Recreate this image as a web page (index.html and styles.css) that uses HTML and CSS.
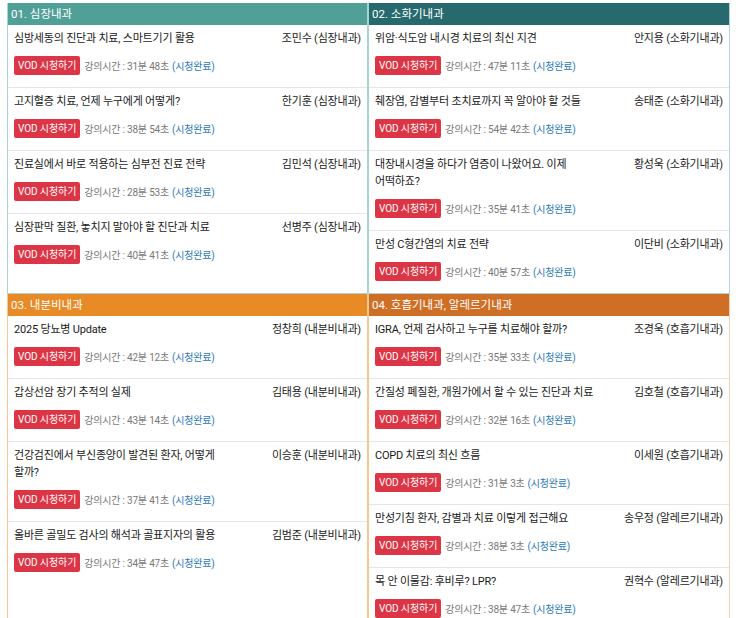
FILE: index.html
```html
<!DOCTYPE html>
<html lang="ko">
<head>
<meta charset="utf-8">
<title>VOD</title>
<link rel="stylesheet" href="styles.css">
</head>
<body>
<div class="grid">
  <section class="panel p1">
    <h2 class="head">01. 심장내과</h2>
    <ul class="list">
      <li class="row"><div class="top"><span class="title">심방세동의 진단과 치료, 스마트기기 활용</span><span class="author">조민수 (심장내과)</span></div><div class="meta"><span class="btn">VOD 시청하기</span><span class="dur">강의시간 : 31분 48초</span><span class="done">(시청완료)</span></div></li>
      <li class="row"><div class="top"><span class="title">고지혈증 치료, 언제 누구에게 어떻게?</span><span class="author">한기훈 (심장내과)</span></div><div class="meta"><span class="btn">VOD 시청하기</span><span class="dur">강의시간 : 38분 54초</span><span class="done">(시청완료)</span></div></li>
      <li class="row"><div class="top"><span class="title">진료실에서 바로 적용하는 심부전 진료 전략</span><span class="author">김민석 (심장내과)</span></div><div class="meta"><span class="btn">VOD 시청하기</span><span class="dur">강의시간 : 28분 53초</span><span class="done">(시청완료)</span></div></li>
      <li class="row"><div class="top"><span class="title">심장판막 질환, 놓치지 말아야 할 진단과 치료</span><span class="author">선병주 (심장내과)</span></div><div class="meta"><span class="btn">VOD 시청하기</span><span class="dur">강의시간 : 40분 41초</span><span class="done">(시청완료)</span></div></li>
    </ul>
  </section>
  <section class="panel p2">
    <h2 class="head">02. 소화기내과</h2>
    <ul class="list">
      <li class="row"><div class="top"><span class="title">위암·식도암 내시경 치료의 최신 지견</span><span class="author">안지용 (소화기내과)</span></div><div class="meta"><span class="btn">VOD 시청하기</span><span class="dur">강의시간 : 47분 11초</span><span class="done">(시청완료)</span></div></li>
      <li class="row"><div class="top"><span class="title">췌장염, 감별부터 초치료까지 꼭 알아야 할 것들</span><span class="author">송태준 (소화기내과)</span></div><div class="meta"><span class="btn">VOD 시청하기</span><span class="dur">강의시간 : 54분 42초</span><span class="done">(시청완료)</span></div></li>
      <li class="row"><div class="top"><span class="title">대장내시경을 하다가 염증이 나왔어요. 이제 어떡하죠?</span><span class="author">황성욱 (소화기내과)</span></div><div class="meta"><span class="btn">VOD 시청하기</span><span class="dur">강의시간 : 35분 41초</span><span class="done">(시청완료)</span></div></li>
      <li class="row"><div class="top"><span class="title">만성 C형간염의 치료 전략</span><span class="author">이단비 (소화기내과)</span></div><div class="meta"><span class="btn">VOD 시청하기</span><span class="dur">강의시간 : 40분 57초</span><span class="done">(시청완료)</span></div></li>
    </ul>
  </section>
  <section class="panel p3">
    <h2 class="head">03. 내분비내과</h2>
    <ul class="list">
      <li class="row"><div class="top"><span class="title">2025 당뇨병 Update</span><span class="author">정창희 (내분비내과)</span></div><div class="meta"><span class="btn">VOD 시청하기</span><span class="dur">강의시간 : 42분 12초</span><span class="done">(시청완료)</span></div></li>
      <li class="row"><div class="top"><span class="title">갑상선암 장기 추적의 실제</span><span class="author">김태용 (내분비내과)</span></div><div class="meta"><span class="btn">VOD 시청하기</span><span class="dur">강의시간 : 43분 14초</span><span class="done">(시청완료)</span></div></li>
      <li class="row"><div class="top"><span class="title">건강검진에서 부신종양이 발견된 환자, 어떻게 할까?</span><span class="author">이승훈 (내분비내과)</span></div><div class="meta"><span class="btn">VOD 시청하기</span><span class="dur">강의시간 : 37분 41초</span><span class="done">(시청완료)</span></div></li>
      <li class="row"><div class="top"><span class="title">올바른 골밀도 검사의 해석과 골표지자의 활용</span><span class="author">김범준 (내분비내과)</span></div><div class="meta"><span class="btn">VOD 시청하기</span><span class="dur">강의시간 : 34분 47초</span><span class="done">(시청완료)</span></div></li>
    </ul>
  </section>
  <section class="panel p4">
    <h2 class="head">04. 호흡기내과, 알레르기내과</h2>
    <ul class="list">
      <li class="row"><div class="top"><span class="title">IGRA, 언제 검사하고 누구를 치료해야 할까?</span><span class="author">조경욱 (호흡기내과)</span></div><div class="meta"><span class="btn">VOD 시청하기</span><span class="dur">강의시간 : 35분 33초</span><span class="done">(시청완료)</span></div></li>
      <li class="row"><div class="top"><span class="title">간질성 폐질환, 개원가에서 할 수 있는 진단과 치료</span><span class="author">김호철 (호흡기내과)</span></div><div class="meta"><span class="btn">VOD 시청하기</span><span class="dur">강의시간 : 32분 16초</span><span class="done">(시청완료)</span></div></li>
      <li class="row"><div class="top"><span class="title">COPD 치료의 최신 흐름</span><span class="author">이세원 (호흡기내과)</span></div><div class="meta"><span class="btn">VOD 시청하기</span><span class="dur">강의시간 : 31분 3초</span><span class="done">(시청완료)</span></div></li>
      <li class="row"><div class="top"><span class="title">만성기침 환자, 감별과 치료 이렇게 접근해요</span><span class="author">송우정 (알레르기내과)</span></div><div class="meta"><span class="btn">VOD 시청하기</span><span class="dur">강의시간 : 38분 3초</span><span class="done">(시청완료)</span></div></li>
      <li class="row"><div class="top"><span class="title">목 안 이물감: 후비루? LPR?</span><span class="author">권혁수 (알레르기내과)</span></div><div class="meta"><span class="btn">VOD 시청하기</span><span class="dur">강의시간 : 38분 47초</span><span class="done">(시청완료)</span></div></li>
    </ul>
  </section>
</div>
</body>
</html>
```
FILE: styles.css
```css
html, body {
  margin: 0;
  padding: 0;
  background: #ffffff;
}
body {
  font-family: Roboto, "Noto Sans CJK KR", sans-serif;
  color: #1a1a1a;
}
.grid {
  display: grid;
  grid-template-columns: 361px 362px;
  width: 723px;
  margin: 3px 0 0 7px;
}
.panel {
  border: 1px solid #a8d3cf;
  border-top: none;
  min-width: 0;
}
.p1 { border-color: #a8d3cf; }
.p2 { border-color: #b3d2dc; border-left-color: #a8d3cf; }
.p3 { border-color: #f6c891; }
.p4 { border-color: #f8ceaf; border-left-color: #f6c891; }
.head {
  margin: 0;
  height: 22px;
  line-height: 22px;
  padding: 0 3px;
  font-size: 11.5px;
  font-weight: 400;
  color: #fff;
}
.p1 .head { background: #50a098; }
.p2 .head { background: #266a6e; }
.p3 .head { background: #e88b27; }
.p4 .head { background: #cf6f26; }
.list {
  list-style: none;
  margin: 0;
  padding: 0;
}
.row {
  padding: 5px 6px 12px 6px;
  border-bottom: 1px solid #e6e6e6;
}
.row:last-child {
  border-bottom: none;
}
.top {
  display: flex;
  justify-content: space-between;
  align-items: flex-start;
  font-size: 11px;
  line-height: 17px;
  letter-spacing: -0.2px;
}
.title {
  flex: 0 1 auto;
  max-width: 226px;
  word-break: keep-all;
  color: #1a1a1a;
}
.author {
  flex: 0 0 auto;
  margin-left: 20px;
  color: #222;
}
.meta {
  display: flex;
  align-items: center;
  margin-top: 9px;
  font-size: 10px;
  letter-spacing: -0.2px;
}
.btn {
  display: inline-block;
  height: 19px;
  line-height: 19px;
  padding: 0 4px;
  background: #dc3545;
  color: #fff;
  border-radius: 2px;
  font-size: 10px;
  letter-spacing: -0.1px;
}
.dur {
  margin-left: 4px;
  color: #777;
}
.done {
  margin-left: 3px;
  color: #2b78b6;
}
```
